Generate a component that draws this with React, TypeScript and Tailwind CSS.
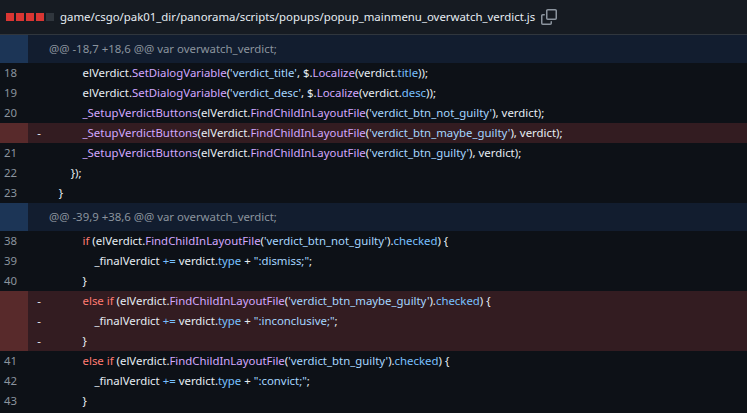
const F = "text-[#d2a8ff]";
const S = "text-[#a5d6ff]";
const K = "text-[#ff7b72]";
const P = "text-[#79c0ff]";

type Seg = [string, string?];
type Row = { n?: string; del?: boolean; indent: number; segs: Seg[] };

const call = (id: string): Seg[] => [
  ["_SetupVerdictButtons", F], ["(elVerdict."], ["FindChildInLayoutFile", F], ["("], [`'${id}'`, S], ["), verdict);"],
];
const cond = (pre: string, id: string): Seg[] => [
  [pre, K], [" (elVerdict."], ["FindChildInLayoutFile", F], ["("], [`'${id}'`, S], [")."], ["checked", P], [") {"],
];
const fin = (v: string): Seg[] => [["_finalVerdict "], ["+=", P], [" verdict."], ["type", P], [" + "], [`":${v};"`, S], [";"]];

const hunk1: Row[] = [
  { n: "18", indent: 12, segs: [["elVerdict."], ["SetDialogVariable", F], ["("], ["'verdict_title'", S], [", $."], ["Localize", F], ["(verdict."], ["title", P], ["));"]] },
  { n: "19", indent: 12, segs: [["elVerdict."], ["SetDialogVariable", F], ["("], ["'verdict_desc'", S], [", $."], ["Localize", F], ["(verdict."], ["desc", P], ["));"]] },
  { n: "20", indent: 12, segs: call("verdict_btn_not_guilty") },
  { del: true, indent: 12, segs: call("verdict_btn_maybe_guilty") },
  { n: "21", indent: 12, segs: call("verdict_btn_guilty") },
  { n: "22", indent: 8, segs: [["});"]] },
  { n: "23", indent: 4, segs: [["}"]] },
];
const hunk2: Row[] = [
  { n: "38", indent: 12, segs: cond("if", "verdict_btn_not_guilty") },
  { n: "39", indent: 16, segs: fin("dismiss") },
  { n: "40", indent: 12, segs: [["}"]] },
  { del: true, indent: 12, segs: cond("else if", "verdict_btn_maybe_guilty") },
  { del: true, indent: 16, segs: fin("inconclusive") },
  { del: true, indent: 12, segs: [["}"]] },
  { n: "41", indent: 12, segs: cond("else if", "verdict_btn_guilty") },
  { n: "42", indent: 16, segs: fin("convict") },
  { n: "43", indent: 12, segs: [["}"]] },
];

const Line = ({ r }: { r: Row }) => (
  <div className={`flex h-5 items-center ${r.del ? "bg-[#331c21]" : ""}`}>
    <div className={`w-7 h-full flex items-center pl-1 text-[#8b949e] ${r.del ? "bg-[#582a2b]" : ""}`}>{r.n}</div>
    <div className="w-[19px] text-right pr-[6px] text-[#e6edf3]">{r.del ? "-" : ""}</div>
    <div className="whitespace-pre text-[#e6edf3]">
      {" ".repeat(r.indent)}
      {r.segs.map((s, i) => (
        <span key={i} className={s[1]}>{s[0]}</span>
      ))}
    </div>
  </div>
);

const Hunk = ({ t }: { t: string }) => (
  <div className="flex h-[28px] items-center bg-[#121d2f]">
    <div className="w-7 h-full bg-[#1c3556]" />
    <div className="pl-[21px] text-[#8b949e] whitespace-pre">{t}</div>
  </div>
);

export default function App() {
  return (
    <div className="w-[747px] h-[413px] overflow-hidden bg-[#0d1117] text-[11.4px] font-['Liberation_Mono']">
      <div className="h-[35px] flex items-center bg-[#161b22] border-b border-[#30363d] px-[6px] gap-[6px]">
        <div className="flex gap-[2px]">
          {[0, 1, 2, 3].map((i) => <div key={i} className="w-[8px] h-[8px] bg-[#da3633]" />)}
          <div className="w-[8px] h-[8px] bg-[#30363d]" />
        </div>
        <span className="text-[#e6edf3] text-[11.4px]">game/csgo/pak01_dir/panorama/scripts/popups/popup_mainmenu_overwatch_verdict.js</span>
        <svg width="16" height="16" viewBox="0 0 16 16" fill="#8b949e">
          <path d="M0 6.75C0 5.784.784 5 1.75 5h1.5a.75.75 0 0 1 0 1.5h-1.5a.25.25 0 0 0-.25.25v7.5c0 .138.112.25.25.25h7.5a.25.25 0 0 0 .25-.25v-1.5a.75.75 0 0 1 1.5 0v1.5A1.75 1.75 0 0 1 9.25 16h-7.5A1.75 1.75 0 0 1 0 14.25Z" />
          <path d="M5 1.75C5 .784 5.784 0 6.75 0h7.5C15.216 0 16 .784 16 1.75v7.5A1.75 1.75 0 0 1 14.25 11h-7.5A1.75 1.75 0 0 1 5 9.25Zm1.75-.25a.25.25 0 0 0-.25.25v7.5c0 .138.112.25.25.25h7.5a.25.25 0 0 0 .25-.25v-7.5a.25.25 0 0 0-.25-.25Z" />
        </svg>
      </div>
      <Hunk t="@@ -18,7 +18,6 @@ var overwatch_verdict;" />
      {hunk1.map((r, i) => <Line key={i} r={r} />)}
      <Hunk t="@@ -39,9 +38,6 @@ var overwatch_verdict;" />
      {hunk2.map((r, i) => <Line key={i} r={r} />)}
    </div>
  );
}
